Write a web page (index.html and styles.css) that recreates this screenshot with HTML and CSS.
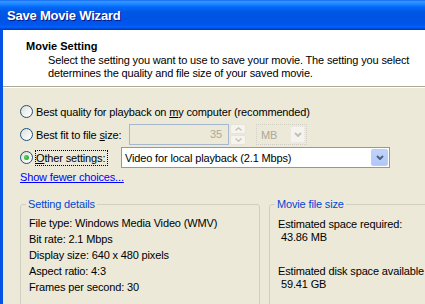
FILE: index.html
```html
<!DOCTYPE html>
<html lang="en">
<head>
<meta charset="UTF-8" />
<title>Save Movie Wizard</title>
<link rel="stylesheet" href="styles.css">
</head>
<body>
    <div class="window">
        <div class="titlebar">
            <span class="title">Save Movie Wizard</span>
        </div>
        <div class="frame">
            <div class="header">
                <div class="heading">Movie Setting</div>
                <p class="desc">Select the setting you want to use to save your movie. The setting you select<br>determines the quality and file size of your saved movie.</p>
            </div>
            <div class="content">
                <div class="options">
                    <div class="opt">
                        <span class="radio"></span>
                        <span class="label">Best quality for playback on <u>m</u>y computer (recommended)</span>
                    </div>
                    <div class="opt">
                        <span class="radio"></span>
                        <span class="label fit">Best fit to file <u>s</u>ize:</span>
                        <div class="spin">
                            <div class="textbox">35</div>
                            <div class="spin-btns">
                                <span class="sb"><svg width="7" height="4" viewBox="0 0 7 4"><path d="M0.5 3.5 L3.5 0.8 L6.5 3.5" fill="none" stroke="#c4c1b2" stroke-width="1.3"/></svg></span>
                                <span class="sb"><svg width="7" height="4" viewBox="0 0 7 4"><path d="M0.5 0.5 L3.5 3.2 L6.5 0.5" fill="none" stroke="#c4c1b2" stroke-width="1.3"/></svg></span>
                            </div>
                        </div>
                        <div class="combo unit">
                            <span class="val">MB</span>
                            <span class="drop off"><svg width="8" height="5" viewBox="0 0 8 5"><path d="M1 1 L4 4 L7 1" fill="none" stroke="#c4c1b2" stroke-width="2"/></svg></span>
                        </div>
                    </div>
                    <div class="opt">
                        <span class="radio on"></span>
                        <span class="label other"><span class="focus"><u>O</u>ther settings:</span></span>
                        <div class="combo main">
                            <span class="val">Video for local playback (2.1 Mbps)</span>
                            <span class="drop"><svg width="8" height="5" viewBox="0 0 8 5"><path d="M1 1 L4 4 L7 1" fill="none" stroke="#4d6185" stroke-width="2"/></svg></span>
                        </div>
                    </div>
                    <a class="link" href="#">Show fewer choices...</a>
                </div>
                <div class="groups">
                    <fieldset class="group details">
                        <legend>Setting details</legend>
                        <div class="line">File type: Windows Media Video (WMV)</div>
                        <div class="line">Bit rate: 2.1 Mbps</div>
                        <div class="line">Display size: 640 x 480 pixels</div>
                        <div class="line">Aspect ratio: 4:3</div>
                        <div class="line">Frames per second: 30</div>
                    </fieldset>
                    <fieldset class="group filesize">
                        <legend>Movie file size</legend>
                        <div class="est">Estimated space required:</div>
                        <div class="est num">43.86 MB</div>
                        <div class="est gap">Estimated disk space available</div>
                        <div class="est num">59.41 GB</div>
                    </fieldset>
                </div>
            </div>
        </div>
    </div>
</body>
</html>
```

FILE: styles.css
```css
:root {
    --face: #ECE9D8;
    --xp-blue: #0554E6;
    --group-line: #D0D0BF;
    --caption: #0046D5;
}

body, html {
    margin: 0;
    padding: 0;
    height: 100%;
    overflow: hidden;
    background: var(--face);
}

.window {
    width: 470px;
    height: 304px;
    display: flex;
    flex-direction: column;
    font-family: "Liberation Sans", Arial, sans-serif;
    font-size: 11px;
    letter-spacing: -0.15px;
    color: #000;
}

/* xp luna title bar */
.titlebar {
    height: 30px;
    flex-shrink: 0;
    display: flex;
    align-items: center;
    padding-left: 7px;
    background: linear-gradient(to bottom,
        #0058EE 0px, #3A93FF 1px, #288EFF 3px, #127DFF 5px, #0369FC 7px,
        #0262EE 9px, #0057E5 12px, #0054E3 18px, #0055EB 24px, #005BF5 26px,
        #0064FF 27px, #0055E4 28px, #0043CF 29px, #0037B8 30px);
}

.title {
    color: #fff;
    font-weight: bold;
    font-size: 13px;
    letter-spacing: -0.2px;
    text-shadow: 1px 1px #0A1883;
    padding-top: 1px;
}

.frame {
    flex: 1;
    display: flex;
    flex-direction: column;
    border-left: 3px solid var(--xp-blue);
}

.header {
    height: 57px;
    background: #fff;
    border-bottom: 1px solid #ACA899;
    box-shadow: 0 1px 0 #fff;
    padding: 10px 0 0 23px;
    box-sizing: border-box;
    line-height: 13px;
}

.heading {
    font-weight: bold;
    letter-spacing: 0;
}

.desc {
    margin: 1px 0 0 22px;
    white-space: nowrap;
}

.content {
    padding: 13px 0 0 17px;
    display: flex;
    flex-direction: column;
}

.options {
    display: flex;
    flex-direction: column;
}

.opt {
    height: 23px;
    display: flex;
    align-items: center;
    white-space: nowrap;
}

.radio {
    width: 13px;
    height: 13px;
    box-sizing: border-box;
    border: 1px solid #1C5180;
    border-radius: 50%;
    background: linear-gradient(135deg, #DCDCD7 0%, #F4F4F1 60%, #fff 100%);
    margin-right: 3px;
    display: flex;
    align-items: center;
    justify-content: center;
    flex-shrink: 0;
}

.radio.on::after {
    content: "";
    width: 5px;
    height: 5px;
    border-radius: 50%;
    background: radial-gradient(circle at 35% 35%, #55D355, #21A121);
}

.label.fit {
    width: 93px;
}

.label.other {
    width: 86px;
    margin-left: -1px;
}

.focus {
    display: inline-block;
    border: 1px dotted #000;
    padding: 0 2px 0 0;
    line-height: 14px;
}

.spin {
    display: flex;
    height: 21px;
}

.textbox {
    width: 100px;
    box-sizing: border-box;
    border: 1px solid #A7B7CC;
    background: var(--face);
    color: #ACA899;
    text-align: right;
    padding: 3px 6px 0 0;
}

.spin-btns {
    width: 16px;
    margin-left: 1px;
    display: flex;
    flex-direction: column;
    gap: 1px;
}

.sb {
    flex: 1;
    border: 1px solid #E6E4DA;
    border-radius: 2px;
    background: #F5F4EF;
    display: flex;
    align-items: center;
    justify-content: center;
}

.combo {
    height: 21px;
    box-sizing: border-box;
    display: flex;
    align-items: center;
    justify-content: space-between;
    padding: 1px;
}

.combo .val {
    padding-left: 2px;
}

.combo.unit {
    width: 51px;
    margin-left: 10px;
    border: 1px dotted #D2D0C4;
    color: #ACA899;
    padding-left: 2px;
}

.combo.main {
    width: 269px;
    border: 1px solid #7F9DB9;
    background: #fff;
}

.drop {
    width: 17px;
    height: 17px;
    box-sizing: border-box;
    border: 1px solid #BBCEF8;
    border-radius: 2px;
    background: linear-gradient(to bottom, #C1D3FB, #B0C7F6);
    display: flex;
    align-items: center;
    justify-content: center;
}

.drop.off {
    width: 15px;
    border: 1px dotted #E2E0D6;
    background: #F4F3EE;
}

.link {
    color: #0000FF;
    text-decoration: underline;
    margin-top: 2px;
    line-height: 13px;
    align-self: flex-start;
}

.groups {
    display: flex;
    gap: 9px;
    margin-top: 14px;
}

.group {
    margin: 0;
    border: 1px solid var(--group-line);
    border-radius: 3px;
    padding: 0 8px;
    height: 140px;
    box-sizing: border-box;
}

.group legend {
    color: var(--caption);
    padding: 0 2px;
    margin-left: -3px;
    line-height: 13px;
}

.details {
    width: 240px;
    padding-top: 4px;
}

.line {
    line-height: 16px;
}

.filesize {
    width: 200px;
    padding-top: 7px;
}

.est {
    line-height: 13px;
}

.est.num {
    padding-left: 3px;
}

.est.gap {
    margin-top: 21px;
}
```
